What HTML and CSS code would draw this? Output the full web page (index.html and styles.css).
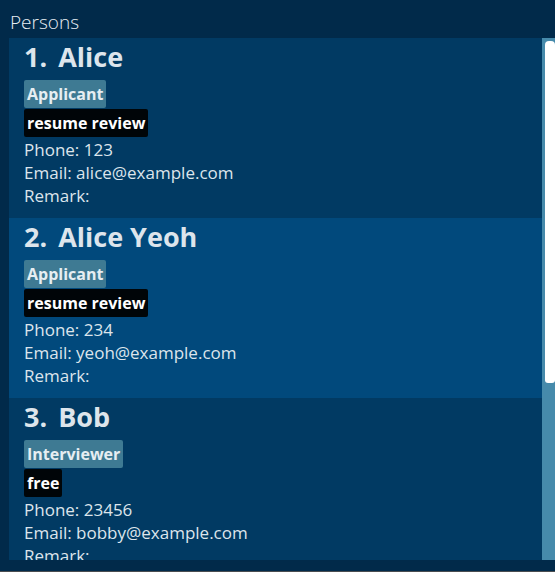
FILE: index.html
```html
<!DOCTYPE html>
<html>
<head>
<meta charset="utf-8">
<link rel="stylesheet" href="styles.css">
</head>
<body>
<div class="app">
  <div class="header">Persons</div>
  <div class="main">
    <div class="list">
      <div class="card odd">
        <div class="name"><span class="idx">1.</span>Alice</div>
        <div class="tags"><span class="role">Applicant</span></div>
        <div class="tags"><span class="status">resume review</span></div>
        <div class="field">Phone: 123</div>
        <div class="field">Email: alice@example.com</div>
        <div class="field">Remark:</div>
      </div>
      <div class="card even">
        <div class="name"><span class="idx">2.</span>Alice Yeoh</div>
        <div class="tags"><span class="role">Applicant</span></div>
        <div class="tags"><span class="status">resume review</span></div>
        <div class="field">Phone: 234</div>
        <div class="field">Email: yeoh@example.com</div>
        <div class="field">Remark:</div>
      </div>
      <div class="card odd">
        <div class="name"><span class="idx">3.</span>Bob</div>
        <div class="tags"><span class="role">Interviewer</span></div>
        <div class="tags"><span class="status">free</span></div>
        <div class="field">Phone: 23456</div>
        <div class="field">Email: bobby@example.com</div>
        <div class="field">Remark:</div>
      </div>
    </div>
    <div class="scrollbar"><div class="thumb"></div></div>
  </div>
  <div class="footer"></div>
</div>
</body>
</html>
```
FILE: styles.css
```css
html, body {
  margin: 0;
  padding: 0;
  background: #012a4a;
  overflow: hidden;
}
.app {
  width: 555px;
  height: 572px;
  display: flex;
  flex-direction: column;
  font-family: "Open Sans", "Noto Sans", sans-serif;
  color: #dde5ec;
}
.header {
  height: 38px;
  padding-left: 10px;
  font-size: 19px;
  font-weight: 300;
  line-height: 44px;
  color: #e8eef3;
  box-sizing: border-box;
}
.main {
  height: 522px;
  margin-left: 9px;
  display: flex;
}
.list {
  flex: 1;
  overflow: hidden;
}
.card {
  height: 180px;
  box-sizing: border-box;
  padding: 0 15px;
}
.odd { background: #013a63; }
.even { background: #01497c; }
.name {
  font-size: 27px;
  font-weight: 700;
  line-height: 38px;
  margin-bottom: 4px;
}
.idx {
  margin-right: 11px;
}
.tags {
  display: flex;
  margin-bottom: 1px;
}
.role, .status {
  font-size: 16px;
  font-weight: 700;
  line-height: 28px;
  padding: 0 3px;
  border-radius: 2px;
  color: #ffffff;
}
.role { background: #3e7a93; color: #e6eef2; }
.status { background: #000508; }
.field {
  font-size: 17px;
  line-height: 23px;
}
.scrollbar {
  width: 13px;
  background: #468aab;
  padding: 3px 0 0 3px;
  box-sizing: border-box;
}
.thumb {
  width: 10px;
  height: 342px;
  background: #ffffff;
  border-radius: 4px 4px 3px 3px;
}
.footer {
  height: 12px;
  border-bottom: 1px solid #4a4d50;
  box-sizing: border-box;
}
```
